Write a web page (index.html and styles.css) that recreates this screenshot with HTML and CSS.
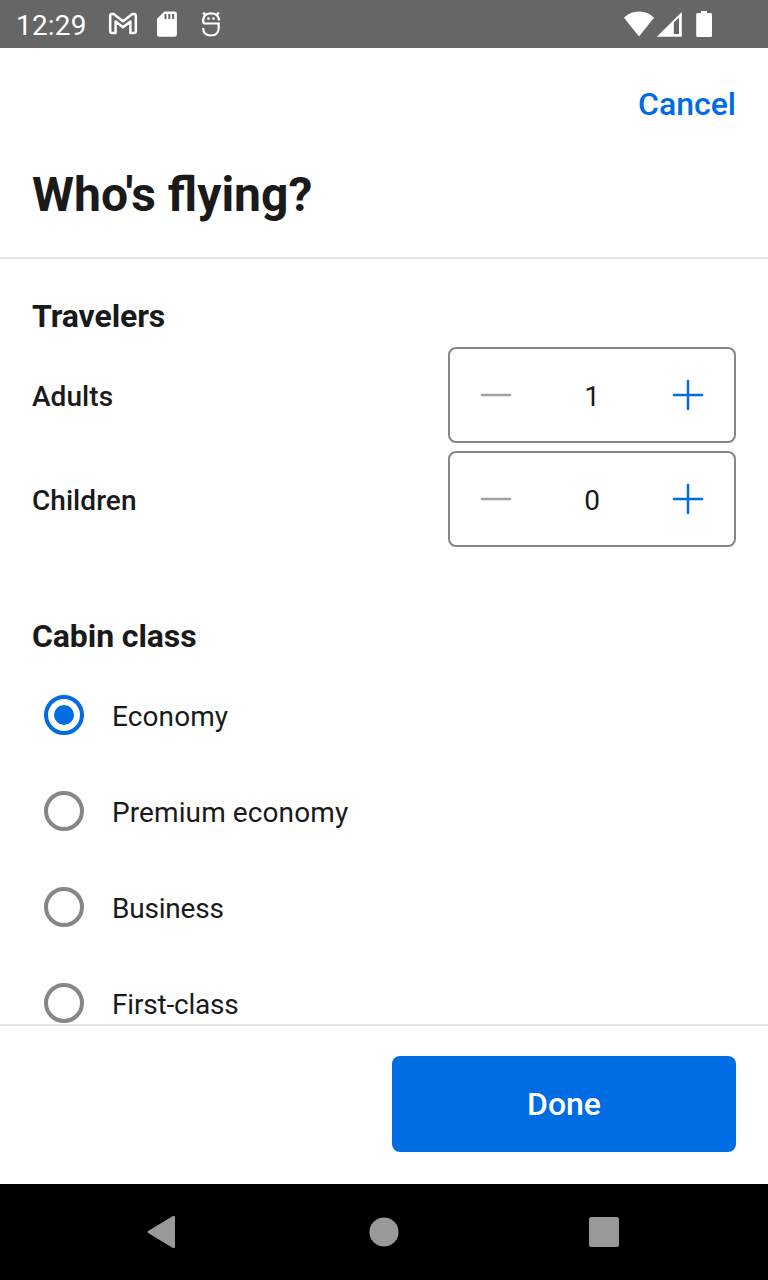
FILE: index.html
```html
<!DOCTYPE html>
<html lang="en">
<head>
<meta charset="utf-8">
<title>Who's flying?</title>
<link rel="stylesheet" href="styles.css">
</head>
<body>
<div class="screen">
  <div class="status-bar">
    <span class="clock">12:29</span>
    <svg class="status-left" width="116" height="48" viewBox="0 0 116 48">
      <path d="M2.200 15.500Q2.200 14 3.800 14H5.600L15 21.200 24.400 14H26.200Q27.800 14 27.800 15.500V31.200Q27.800 33 26 33H22.400V21.500L15 27.200 7.600 21.500V33H4Q2.200 33 2.200 31.200Z" fill="none" stroke="#fff" stroke-width="2.500" stroke-linejoin="round"/>
      <path d="M56.500 11.500H66.700Q68.900 11.500 68.900 13.700V34.500Q68.900 36.700 66.700 36.700H51.200Q49 36.700 49 34.500V18.800Z" fill="#fff"/>
      <path d="M57.500 14v5M61.300 14v5M65.100 14v5" stroke="#666" stroke-width="2"/>
      <path d="M111 20.500V19.500Q110 13.300 103 13.300T95.200 19.500V21.500Q95.200 23.500 97.200 23.500H110.700V27.500Q110.700 35.500 102.900 35.500 95.200 35.500 95.200 28" fill="none" stroke="#fff" stroke-width="2.200"/>
      <path d="M97.500 15.500L95.300 12.500M108.500 15.500L110.700 12.500" stroke="#fff" stroke-width="2.400"/>
      <circle cx="100.500" cy="18.600" r="1.300" fill="#fff"/><circle cx="105.500" cy="18.600" r="1.300" fill="#fff"/>
    </svg>
    <svg class="status-right" width="90" height="48" viewBox="0 0 90 48">
      <path d="M1 17.800Q7 11.500 16 11.500T31 17.800L16 36.500Z" fill="#fff"/>
      <path fill-rule="evenodd" d="M58.800 12V36.800H33.800ZM50.800 22.500V34H56V17.500Z" fill="#fff"/>
      <path d="M78 11H84V13H87.500Q89 13 89 14.500V35.500Q89 37 87.500 37H74.700Q73.200 37 73.200 35.500V14.500Q73.200 13 74.700 13H78Z" fill="#fff"/>
    </svg>
  </div>

  <header class="header">
    <a class="cancel">Cancel</a>
    <h1 class="title">Who's flying?</h1>
  </header>

  <main class="content">
    <h2 class="section-title">Travelers</h2>
    <div class="travelers">
      <div class="traveler">
        <span class="traveler-label">Adults</span>
        <div class="stepper">
          <svg class="step-icon minus" viewBox="0 0 32 32"><path d="M2 16H30"/></svg>
          <span class="count">1</span>
          <svg class="step-icon plus" viewBox="0 0 32 32"><path d="M2 16H30M16 2V30"/></svg>
        </div>
      </div>
      <div class="traveler">
        <span class="traveler-label">Children</span>
        <div class="stepper">
          <svg class="step-icon minus" viewBox="0 0 32 32"><path d="M2 16H30"/></svg>
          <span class="count">0</span>
          <svg class="step-icon plus" viewBox="0 0 32 32"><path d="M2 16H30M16 2V30"/></svg>
        </div>
      </div>
    </div>
    <h2 class="section-title cabin-title">Cabin class</h2>
    <div class="option"><span class="radio selected"></span><span class="option-label loose">Economy</span></div>
    <div class="option"><span class="radio"></span><span class="option-label loose">Premium economy</span></div>
    <div class="option"><span class="radio"></span><span class="option-label tight">Business</span></div>
    <div class="option"><span class="radio"></span><span class="option-label tight">First-class</span></div>
  </main>

  <footer class="footer">
    <button class="done">Done</button>
  </footer>

  <nav class="nav-bar">
    <svg width="32" height="36" viewBox="0 0 32 36"><path d="M3.500 16.800L27.500 2.300Q30 1 30 3.500V32.500Q30 35 27.500 33.700L3.500 19.200Q1.500 18 3.500 16.800Z" fill="#999"/></svg>
    <svg width="34" height="32" viewBox="0 0 34 32"><circle cx="18" cy="16" r="14.600" fill="#999"/></svg>
    <svg width="32" height="32" viewBox="0 0 32 32"><rect x="1" y="1" width="30" height="30" rx="2.500" fill="#999"/></svg>
  </nav>
</div>
</body>
</html>
```

FILE: styles.css
```css
* { box-sizing: border-box; }
body {
  margin: 0;
  font-family: Roboto, sans-serif;
  color: #1a1a1a;
  background: #fff;
}
.screen {
  width: 768px;
  height: 1280px;
  display: flex;
  flex-direction: column;
  overflow: hidden;
}
.status-bar {
  flex: none;
  height: 48px;
  padding: 0 55px 0 16px;
  display: flex;
  align-items: center;
  background: #666;
  color: #fff;
}
.clock {
  width: 92px;
  padding-top: 4px;
  font-size: 28px;
  line-height: 32px;
  letter-spacing: 0.2px;
}
.status-right { margin-left: auto; }
.header {
  flex: none;
  height: 211px;
  padding: 36px 32px 0;
  display: flex;
  flex-direction: column;
  border-bottom: 2px solid #e6e6e6;
}
.cancel {
  align-self: flex-end;
  font-size: 32px;
  line-height: 40px;
  font-weight: 500;
  color: #006ce4;
}
.title {
  margin: 43px 0 0;
  font-size: 48px;
  line-height: 56px;
  font-weight: 700;
}
.content {
  flex: none;
  height: 765px;
  padding: 37px 32px 0;
  overflow: hidden;
}
.section-title {
  margin: 0;
  font-size: 32px;
  line-height: 40px;
  font-weight: 700;
  letter-spacing: -0.1px;
}
.travelers {
  margin-top: 11px;
  display: grid;
  gap: 8px;
}
.traveler {
  height: 96px;
  display: flex;
  align-items: center;
  justify-content: space-between;
}
.traveler-label {
  padding-top: 4px;
  font-size: 28px;
  line-height: 40px;
  font-weight: 500;
  letter-spacing: 0.05px;
}
.stepper {
  width: 288px;
  height: 96px;
  padding: 0 30px;
  display: flex;
  align-items: center;
  justify-content: space-between;
  border: 2px solid #868686;
  border-radius: 8px;
}
.step-icon {
  width: 32px;
  height: 32px;
  fill: none;
  stroke-width: 2.5;
  stroke-linecap: round;
}
.minus { stroke: #a2a2a2; }
.plus { stroke: #006ce4; }
.count {
  padding-top: 4px;
  font-size: 28px;
  line-height: 40px;
}
.cabin-title {
  margin-top: 69px;
  margin-bottom: 11px;
}
.option {
  height: 96px;
  padding-left: 12px;
  display: flex;
  align-items: center;
  gap: 28px;
}
.radio {
  flex: none;
  width: 40px;
  height: 40px;
  display: grid;
  place-items: center;
  border: 4px solid #868686;
  border-radius: 50%;
}
.selected { border-color: #006ce4; }
.selected::after {
  content: "";
  width: 20px;
  height: 20px;
  border-radius: 50%;
  background: #006ce4;
}
.option-label {
  padding-top: 4px;
  font-size: 28px;
  line-height: 40px;
}
.loose { letter-spacing: 0.1px; }
.tight { letter-spacing: -0.2px; }
.footer {
  flex: none;
  height: 160px;
  padding: 30px 32px;
  display: flex;
  justify-content: flex-end;
  border-top: 2px solid #e6e6e6;
}
.done {
  width: 344px;
  height: 96px;
  padding: 0;
  border: 0;
  border-radius: 8px;
  background: #006ce4;
  color: #fff;
  font: 500 32px/40px Roboto, sans-serif;
}
.nav-bar {
  flex: none;
  height: 96px;
  padding: 0 148px 0 145px;
  display: flex;
  align-items: center;
  justify-content: space-between;
  background: #000;
}
```
